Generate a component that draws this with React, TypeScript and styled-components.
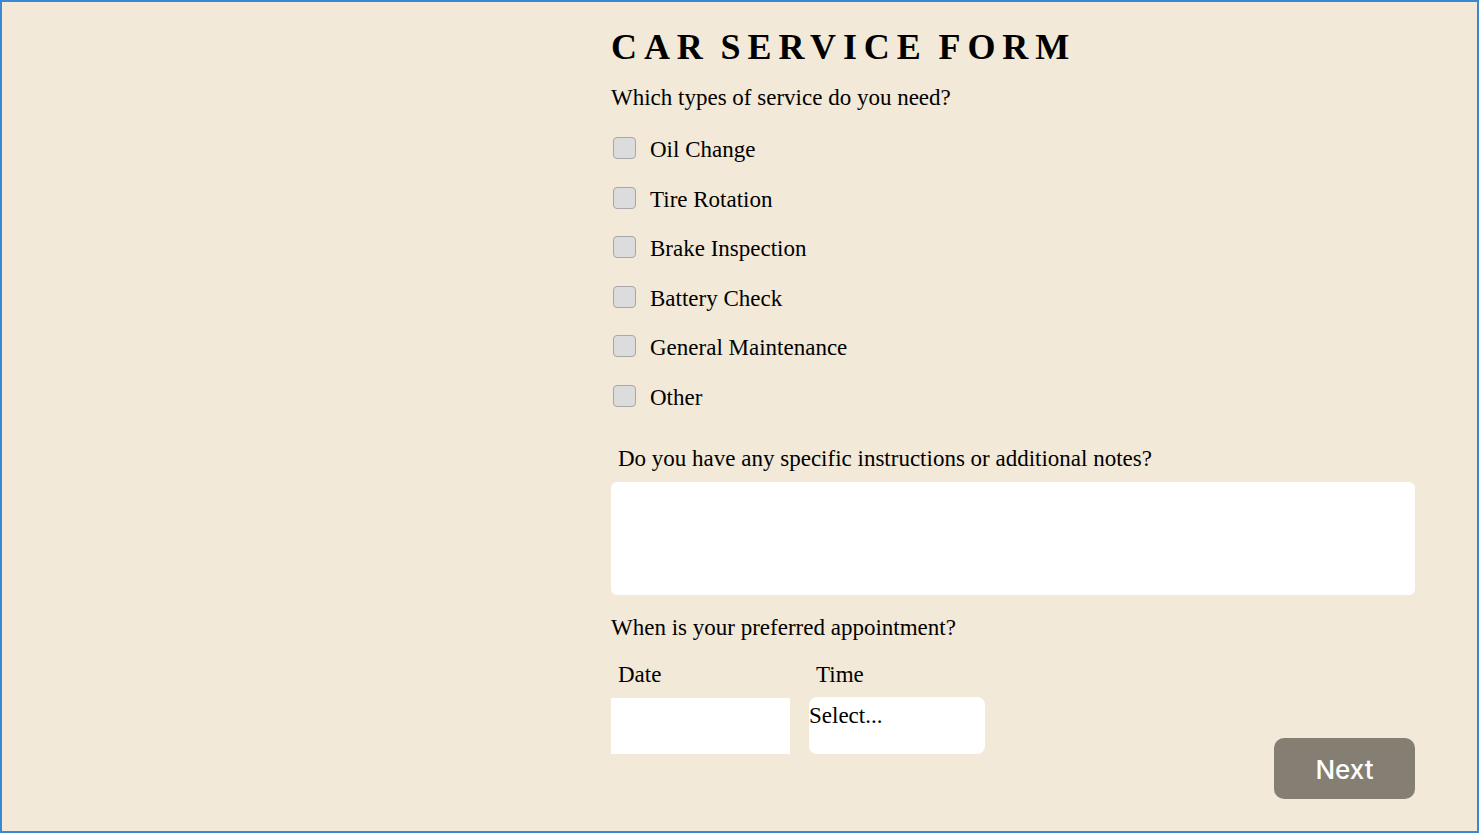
import styled, { createGlobalStyle } from "styled-components";

const GlobalStyle = createGlobalStyle`
  * {
    box-sizing: border-box;
  }
  body {
    margin: 0;
    background: #f2e9d8;
    font-family: "Liberation Serif", "Times New Roman", serif;
    color: #000;
  }
`;

const Page = styled.div`
  height: 100vh;
  border: 2px solid #3b88d2;
  display: grid;
  grid-template-columns: 609px 1fr;
  padding: 23px 62px 0 0;
  overflow: hidden;
`;

const Aside = styled.div``;

const Form = styled.form`
  display: flex;
  flex-direction: column;
`;

const Title = styled.h1`
  margin: 0;
  font-size: 36px;
  line-height: 44px;
  font-weight: 700;
  letter-spacing: 6.9px;
  word-spacing: -5px;
`;

const Question = styled.p<{ $top: number }>`
  margin: ${(p) => p.$top}px 0 0;
  font-size: 23px;
  line-height: 28px;
`;

const Options = styled.div`
  display: flex;
  flex-direction: column;
  gap: 21.6px;
  margin-top: 24px;
`;

const Option = styled.label`
  display: flex;
  align-items: flex-end;
  gap: 14px;
  font-size: 23px;
  line-height: 28px;
`;

const Box = styled.input.attrs({ type: "checkbox" })`
  appearance: none;
  width: 23px;
  height: 22px;
  margin: 0 0 5px 2px;
  border: 1px solid #a7a7a7;
  border-radius: 4px;
  background: #dcdcdc;
  flex-shrink: 0;
`;

const FieldLabel = styled.label<{ $top?: number }>`
  display: block;
  margin: ${(p) => p.$top ?? 0}px 0 0 7px;
  font-size: 23px;
  line-height: 28px;
`;

const Notes = styled.textarea`
  margin-top: 9px;
  height: 113px;
  width: 100%;
  border: none;
  border-radius: 6px;
  background: #fff;
  resize: none;
`;

const Footer = styled.div`
  display: flex;
  justify-content: space-between;
  align-items: flex-start;
  margin-top: 19px;
`;

const Schedule = styled.div`
  display: flex;
  gap: 19px;
`;

const Field = styled.div<{ $width: number }>`
  width: ${(p) => p.$width}px;
  display: flex;
  flex-direction: column;
`;

const DateInput = styled.input`
  margin-top: 9px;
  height: 56px;
  width: 100%;
  border: none;
  background: #fff;
`;

const TimeSelect = styled.div`
  margin-top: 8px;
  height: 57px;
  width: 100%;
  border-radius: 8px;
  background: #fff;
  font-size: 23px;
  line-height: 28px;
  padding-top: 5px;
`;

const NextButton = styled.button`
  margin-top: 77px;
  width: 141px;
  height: 61px;
  padding-top: 3px;
  border: none;
  border-radius: 10px;
  background: #857e72;
  color: #fff;
  font-family: Inter, "Noto Sans", sans-serif;
  font-size: 26px;
  font-weight: 500;
`;

const services = [
  "Oil Change",
  "Tire Rotation",
  "Brake Inspection",
  "Battery Check",
  "General Maintenance",
  "Other",
];

export default function App() {
  return (
    <>
      <GlobalStyle />
      <Page>
        <Aside />
        <Form onSubmit={(e) => e.preventDefault()}>
          <Title>CAR SERVICE FORM</Title>
          <Question $top={15}>Which types of service do you need?</Question>
          <Options>
            {services.map((s) => (
              <Option key={s}>
                <Box />
                {s}
              </Option>
            ))}
          </Options>
          <FieldLabel $top={33}>
            Do you have any specific instructions or additional notes?
          </FieldLabel>
          <Notes />
          <Question $top={19}>When is your preferred appointment?</Question>
          <Footer>
            <Schedule>
              <Field $width={179}>
                <FieldLabel>Date</FieldLabel>
                <DateInput />
              </Field>
              <Field $width={176}>
                <FieldLabel>Time</FieldLabel>
                <TimeSelect>Select...</TimeSelect>
              </Field>
            </Schedule>
            <NextButton type="submit">Next</NextButton>
          </Footer>
        </Form>
      </Page>
    </>
  );
}
